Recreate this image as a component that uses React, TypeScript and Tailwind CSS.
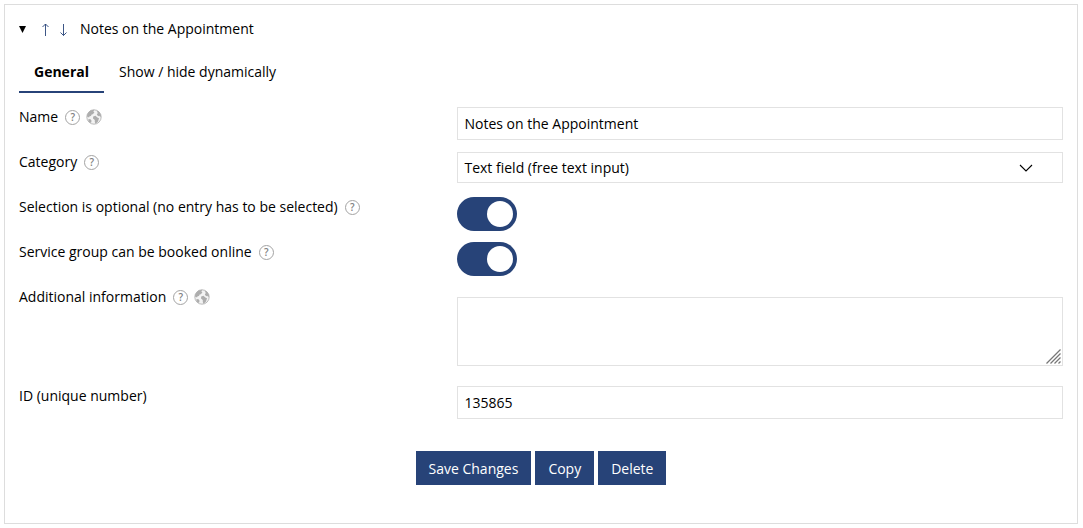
import { useState, type ReactNode } from 'react';

interface FieldRowProps {
  label: string;
  htmlFor: string;
  help?: boolean;
  translatable?: boolean;
  children: ReactNode;
}

const GlobeIcon = () => (
  <svg viewBox="0 0 16 16" className="size-4">
    <circle cx="8" cy="8" r="7.2" fill="#f3f3f3" stroke="#b4b4b4" strokeWidth="0.9" />
    <g fill="#adadad">
      <path d="M2.2 4L4.4 1.6 8.2 .8 7.4 2.4 8.4 3.4 6.8 5.2 5.6 5.4 5 7 3.6 7.2 3 8.6 1 7.6 1.2 5.4z" />
      <path d="M10.4 1.4L13.2 3 15 6 14.6 8.2 13.2 6.8 12.2 7.2 10.8 5.4 11.8 4z" />
      <path d="M7.2 7.6L9.4 6.8 11.4 8.4 13 9.2 12 12.4 9.6 15 8.8 13 8.8 11 7 9.6z" />
      <path d="M2 10.4L4.2 10 5.6 11.8 5 14 3 12.8z" />
    </g>
  </svg>
);

const ArrowIcon = ({ down }: { down?: boolean }) => (
  <svg viewBox="0 0 8 13" className="h-[13px] w-2" fill="none" stroke="#274378" strokeWidth="0.9">
    <path d={down ? 'M4.5 1v11.5M1.5 9.5l3 3 3-3' : 'M4.5 13V1M1.5 4l3-3 3 3'} />
  </svg>
);

const FieldRow = ({ label, htmlFor, help, translatable, children }: FieldRowProps) => (
  <div className="flex min-h-[45px] items-start">
    <div className="flex w-[42%] shrink-0 items-center leading-5">
      <label htmlFor={htmlFor}>{label}</label>
      {help && (
        <button
          type="button"
          aria-label={`Help: ${label}`}
          className="ml-[7px] flex size-[15px] items-center justify-center rounded-full border border-[#a3a3a3] text-[10px] leading-none font-semibold text-[#808080]"
        >
          ?
        </button>
      )}
      {translatable && (
        <button type="button" aria-label={`Translate: ${label}`} className="ml-[6px]">
          <GlobeIcon />
        </button>
      )}
    </div>
    <div className="min-w-0 grow">{children}</div>
  </div>
);

const Toggle = ({ id }: { id: string }) => (
  <input
    id={id}
    type="checkbox"
    role="switch"
    defaultChecked
    className="flex h-[34px] w-[60px] cursor-pointer appearance-none items-center rounded-full bg-[#cccccc] p-1 before:size-[26px] before:rounded-full before:bg-white checked:justify-end checked:bg-[#274378]"
  />
);

const fieldClass = 'block w-full border border-[#e2e2e2] bg-white px-[6px] outline-none';
const buttonClass = 'h-[34px] cursor-pointer bg-[#274378] px-[13px] pt-px text-white hover:bg-[#1d335c]';
const tabClass = 'h-[42px] border-b-2 px-[15px] pt-[2px]';
const tabs = ['General', 'Show / hide dynamically'];

export default function App() {
  const [open, setOpen] = useState(true);
  const [activeTab, setActiveTab] = useState(tabs[0]);

  return (
    <main className="p-1 pr-[5px] font-['Open_Sans',sans-serif] text-sm text-black">
      <section className="border border-[#dddddd] px-[14px] pt-[14px] pb-[38px]">
        <header className="flex h-5 items-center">
          <button
            type="button"
            aria-label="Toggle section"
            aria-expanded={open}
            onClick={() => setOpen(!open)}
            className="w-[22px]"
          >
            <svg viewBox="0 0 7 7" className={open ? 'size-[7px]' : 'size-[7px] -rotate-90'}>
              <path d="M0 0h7L3.5 7z" />
            </svg>
          </button>
          <a href="#up" aria-label="Move up" className="w-[18px]">
            <ArrowIcon />
          </a>
          <a href="#down" aria-label="Move down" className="w-[21px]">
            <ArrowIcon down />
          </a>
          <h2>Notes on the Appointment</h2>
        </header>

        {open && (
          <form onSubmit={(e) => e.preventDefault()}>
            <div role="tablist" className="mt-3 mb-[14px] flex">
              {tabs.map((tab) => (
                <button
                  key={tab}
                  type="button"
                  role="tab"
                  aria-selected={tab === activeTab}
                  onClick={() => setActiveTab(tab)}
                  className={`${tabClass} ${tab === activeTab ? 'border-[#274378] font-bold' : 'border-transparent'}`}
                >
                  {tab}
                </button>
              ))}
            </div>

            <FieldRow label="Name" htmlFor="name" help translatable>
              <input id="name" type="text" defaultValue="Notes on the Appointment" className={`${fieldClass} h-[33px]`} />
            </FieldRow>
            <FieldRow label="Category" htmlFor="category" help>
              <div className="relative">
                <select id="category" className={`${fieldClass} h-[31px] appearance-none`}>
                  <option>Text field (free text input)</option>
                </select>
                <svg
                  viewBox="0 0 14 8"
                  className="pointer-events-none absolute top-3 right-[30px] h-2 w-[14px]"
                  fill="none"
                  stroke="black"
                  strokeWidth="1.1"
                >
                  <path d="M1 1l6 6 6-6" />
                </svg>
              </div>
            </FieldRow>
            <FieldRow label="Selection is optional (no entry has to be selected)" htmlFor="optional" help>
              <Toggle id="optional" />
            </FieldRow>
            <FieldRow label="Service group can be booked online" htmlFor="online" help>
              <Toggle id="online" />
            </FieldRow>
            <FieldRow label="Additional information" htmlFor="info" help translatable>
              <div className="relative mt-[10px] mb-5">
                <textarea id="info" className={`${fieldClass} h-[69px] resize-none py-1`} />
                <svg
                  viewBox="0 0 15 15"
                  className="pointer-events-none absolute right-[2px] bottom-[2px] size-[15px]"
                  fill="none"
                  stroke="#777777"
                  strokeWidth="1.3"
                >
                  <path d="M0.5 14.5L14.5 0.5M4.5 14.5l10-10M8.5 14.5l6-6M12.5 14.5l2-2" />
                </svg>
              </div>
            </FieldRow>
            <FieldRow label="ID (unique number)" htmlFor="uid">
              <input id="uid" type="text" defaultValue="135865" className={`${fieldClass} h-[33px]`} />
            </FieldRow>

            <div className="mt-5 flex justify-center gap-1">
              <button type="submit" className={buttonClass}>
                Save Changes
              </button>
              <button type="button" className={buttonClass}>
                Copy
              </button>
              <button type="button" className={buttonClass}>
                Delete
              </button>
            </div>
          </form>
        )}
      </section>
    </main>
  );
}
